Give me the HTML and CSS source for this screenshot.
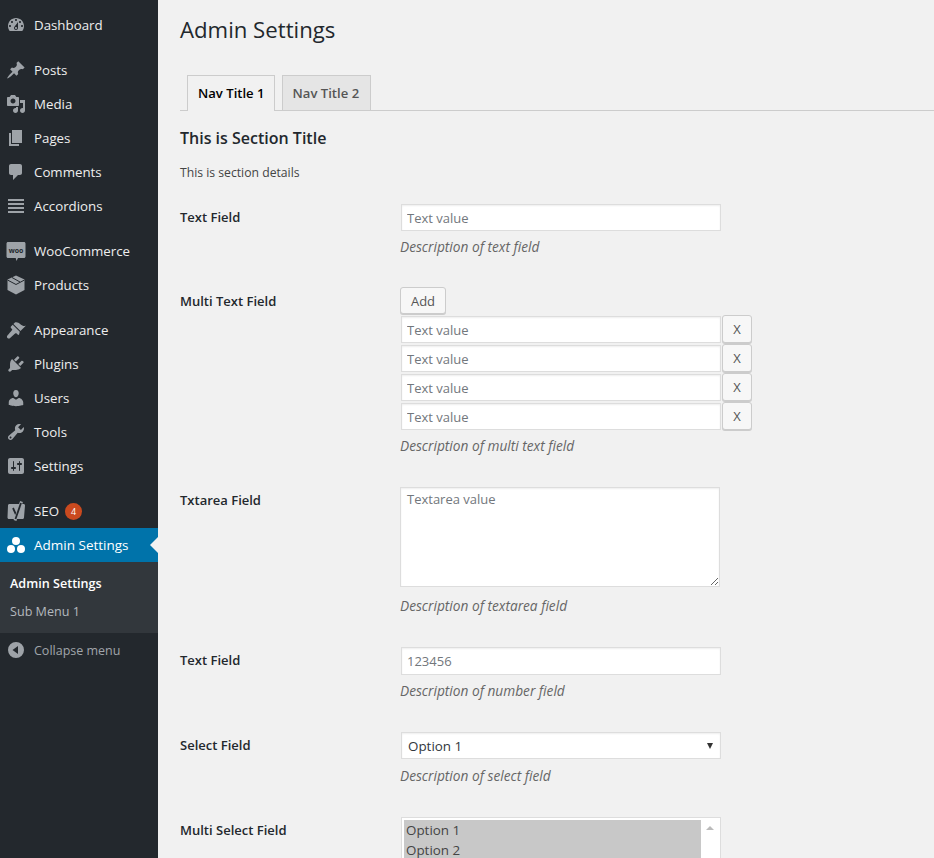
FILE: index.html
```html
<!DOCTYPE html>
<html lang="en">
<head>
<meta charset="utf-8">
<title>Admin Settings</title>
<link rel="stylesheet" href="styles.css">
</head>
<body>
<div id="wrap">
  <div id="adminmenu">
    <a class="menu-item"><svg class="ico" viewBox="0 0 20 20"><path d="M3.76 16h12.48c1.1-1.37 1.76-3.11 1.76-5 0-4.42-3.58-8-8-8s-8 3.58-8 8c0 1.89.66 3.63 1.76 5zM10 4c.55 0 1 .45 1 1s-.45 1-1 1-1-.45-1-1 .45-1 1-1zM6 6c.55 0 1 .45 1 1s-.45 1-1 1-1-.45-1-1 .45-1 1-1zm8 0c.55 0 1 .45 1 1s-.45 1-1 1-1-.45-1-1 .45-1 1-1zm-5.37 5.55L12 7v6c0 1.1-.9 2-2 2s-2-.9-2-2c0-.57.24-1.08.63-1.45zM4 10c.55 0 1 .45 1 1s-.45 1-1 1-1-.45-1-1 .45-1 1-1zm12 0c.55 0 1 .45 1 1s-.45 1-1 1-1-.45-1-1 .45-1 1-1zm-5 3c0-.55-.45-1-1-1s-1 .45-1 1 .45 1 1 1 1-.45 1-1z"/></svg>Dashboard</a>
    <div class="menu-sep"></div>
    <a class="menu-item"><svg class="ico" viewBox="0 0 20 20"><path d="M10.44 3.02l1.82-1.82 6.36 6.35-1.83 1.82c-1.05-.68-2.48-.57-3.41.36l-.75.75c-.92.93-1.04 2.35-.35 3.41l-1.83 1.82-2.41-2.41-2.8 2.79c-.42.42-3.38 2.71-3.8 2.29s1.86-3.39 2.28-3.81l2.79-2.79L4.1 9.36l1.83-1.82c1.05.69 2.48.57 3.4-.36l.75-.75c.93-.92 1.05-2.35.36-3.41z"/></svg>Posts</a>
    <a class="menu-item"><svg class="ico" viewBox="0 0 20 20"><path d="M13 11V4c0-.55-.45-1-1-1h-1.67L9 1H5L3.67 3H2c-.55 0-1 .45-1 1v7c0 .55.45 1 1 1h10c.55 0 1-.45 1-1zM7 4.5c1.38 0 2.5 1.12 2.5 2.5S8.38 9.5 7 9.5 4.5 8.38 4.5 7 5.62 4.5 7 4.5zM14 6h5v10.5c0 1.38-1.12 2.5-2.5 2.5S14 17.88 14 16.5s1.12-2.5 2.5-2.5c.17 0 .34.02.5.05V9h-3V6zm-4 8.05V13h2v3.5c0 1.38-1.12 2.5-2.5 2.5S7 17.88 7 16.5 8.12 14 9.5 14c.17 0 .34.02.5.05z"/></svg>Media</a>
    <a class="menu-item"><svg class="ico" viewBox="0 0 20 20"><path d="M6 15V2h10v13H6zm-1 1h8v2H3V5h2v11z"/></svg>Pages</a>
    <a class="menu-item"><svg class="ico" viewBox="0 0 20 20"><path d="M5 2h9c1.1 0 2 .9 2 2v7c0 1.1-.9 2-2 2h-2l-5 5v-5H5c-1.1 0-2-.9-2-2V4c0-1.1.9-2 2-2z"/></svg>Comments</a>
    <a class="menu-item"><svg class="ico" viewBox="0 0 20 20"><path d="M2 3h16v2H2zM2 7h16v2H2zM2 11h16v2H2zM2 15h16v2H2z"/></svg>Accordions</a>
    <div class="menu-sep"></div>
    <a class="menu-item"><svg class="ico" viewBox="0 0 20 20"><path d="M2 1h16c.8 0 1.500.7 1.500 1.500v13c0 .8-.7 1.500-1.500 1.500h-6l-1.500 3-.8-3H2c-.8 0-1.500-.7-1.500-1.500v-13C.5 1.700 1.200 1 2 1z"/><text class="woo-text" x="10" y="11.500" text-anchor="middle">woo</text></svg>WooCommerce</a>
    <a class="menu-item"><svg class="ico" viewBox="0 0 20 20"><path d="M10 .5l8.500 4v10.500l-8.500 4.500-8.500-4.500V4.500z"/><path class="ico-line" d="M1.500 5l8.500 4.500L18.500 5M6 2.500l8 4.500"/></svg>Products</a>
    <div class="menu-sep"></div>
    <a class="menu-item"><svg class="ico" viewBox="0 0 20 20"><path d="M14.480 11.060L7.410 3.990l1.500-1.500c.5-.56 2.300-.47 3.510.32 1.210.8 1.430 1.280 2.910 2.100 1.180.64 2.450 1.260 4.450.85zm-.71.71L6.700 4.700 4.930 6.470c-.39.39-.39 1.020 0 1.410l1.060 1.060c.39.39.39 1.030 0 1.420-.6.6-3.900 4.500-4.500 5.100-.7.7-.7 1.900 0 2.600s1.900.7 2.600 0c.6-.6 4.500-3.900 5.100-4.500.39-.39 1.020-.39 1.410 0l1.060 1.060c.39.39 1.020.39 1.410 0z"/></svg>Appearance</a>
    <a class="menu-item"><svg class="ico" viewBox="0 0 20 20"><path d="M13.110 4.360L9.870 7.600 8 5.730l3.240-3.240c.35-.34 1.050-.2 1.560.32.520.51.660 1.210.310 1.550zm-8 1.770l.91-1.120 9.010 9.010-1.190.84c-.71.71-2.630 1.160-3.820 1.160H6.140L4.900 17.260c-.59.59-1.540.59-2.120 0-.59-.58-.59-1.530 0-2.120l1.240-1.240v-3.880c0-1.130.4-3.190 1.090-3.890zm7.260 3.970l3.240-3.240c.34-.35 1.040-.21 1.550.31.520.51.660 1.210.310 1.550l-3.240 3.250z"/></svg>Plugins</a>
    <a class="menu-item"><svg class="ico" viewBox="0 0 20 20"><path d="M10 9.250c-2.270 0-2.730-3.440-2.730-3.440C7 4.020 7.820 2 9.970 2c2.160 0 2.980 2.020 2.710 3.810 0 0-.41 3.440-2.680 3.440zm0 2.570L12.720 10c2.390 0 4.520 2.330 4.520 4.530v2.490s-3.650 1.130-7.240 1.130c-3.650 0-7.240-1.130-7.240-1.130v-2.490c0-2.250 1.940-4.480 4.470-4.480z"/></svg>Users</a>
    <a class="menu-item"><svg class="ico" viewBox="0 0 20 20"><path d="M16.680 9.770c-1.340 1.340-3.300 1.670-4.950.99l-5.410 6.520c-.99.99-2.590.99-3.580 0s-.99-2.590 0-3.570l6.520-5.420c-.68-1.650-.35-3.610.99-4.950 1.280-1.280 3.120-1.620 4.720-1.060l-2.890 2.890 2.820 2.820 2.860-2.870c.53 1.580.18 3.390-1.080 4.650zM3.810 16.210c.4.39 1.040.39 1.430 0 .4-.4.4-1.040 0-1.430-.39-.4-1.030-.4-1.430 0-.39.39-.39 1.030 0 1.430z"/></svg>Tools</a>
    <a class="menu-item"><svg class="ico" viewBox="0 0 20 20"><path d="M18 16V4c0-1.100-.9-2-2-2H4c-1.100 0-2 .9-2 2v12c0 1.100.9 2 2 2h12c1.100 0 2-.9 2-2zM8 11h1c.55 0 1 .45 1 1s-.45 1-1 1H8v1.500c0 .28-.22.5-.5.5s-.5-.22-.5-.5V13H6c-.55 0-1-.45-1-1s.45-1 1-1h1V5.500c0-.28.22-.5.5-.5s.5.22.5.5V11zm5-2h-1c-.55 0-1-.45-1-1s.45-1 1-1h1V5.500c0-.28.22-.5.5-.5s.5.22.5.5V7h1c.55 0 1 .45 1 1s-.45 1-1 1h-1v5.500c0 .28-.22.5-.5.5s-.5-.22-.5-.5V9z"/></svg>Settings</a>
    <div class="menu-sep"></div>
    <a class="menu-item"><svg class="ico" viewBox="0 0 20 20"><path d="M3.500 3h14c1 0 1.500.6 1.500 1.500l-1 12c0 .9-.6 1.500-1.500 1.500H3c-1 0-1.500-.6-1.500-1.500l.5-12C2 3.600 2.600 3 3.500 3z"/><path class="ico-y" d="M7 7l3 6.500"/><path class="ico-y-edge" d="M15.500 .5L9 19.500"/><path class="ico-y" d="M15 2L9.500 18"/></svg>SEO<span class="count">4</span></a>
    <a class="menu-item current"><svg class="ico" viewBox="0 0 20 20"><circle cx="10" cy="6" r="4"/><circle cx="5" cy="14" r="4"/><circle cx="15" cy="14" r="4"/></svg>Admin Settings</a>
    <div class="submenu">
      <a class="sub-head">Admin Settings</a>
      <a>Sub Menu 1</a>
    </div>
    <a class="menu-item collapse"><svg class="ico" viewBox="0 0 20 20"><path d="M10 2a8 8 0 1 1 0 16 8 8 0 0 1 0-16zm2 4L6.500 10l5.500 4z" fill-rule="evenodd"/></svg>Collapse menu</a>
  </div>

  <div id="content">
    <h1>Admin Settings</h1>
    <div class="tabs">
      <a class="tab active">Nav Title 1</a>
      <a class="tab">Nav Title 2</a>
    </div>
    <h2>This is Section Title</h2>
    <p class="details">This is section details</p>

    <div class="row row-text">
      <label>Text Field</label>
      <div class="field">
        <input type="text" value="Text value">
        <p class="desc">Description of text field</p>
      </div>
    </div>

    <div class="row row-multi">
      <label>Multi Text Field</label>
      <div class="field">
        <button class="btn btn-add">Add</button>
        <div class="multi-line"><input type="text" value="Text value"><button class="btn btn-x">X</button></div>
        <div class="multi-line"><input type="text" value="Text value"><button class="btn btn-x">X</button></div>
        <div class="multi-line"><input type="text" value="Text value"><button class="btn btn-x">X</button></div>
        <div class="multi-line"><input type="text" value="Text value"><button class="btn btn-x">X</button></div>
        <p class="desc">Description of multi text field</p>
      </div>
    </div>

    <div class="row row-area">
      <label>Txtarea Field</label>
      <div class="field">
        <textarea>Textarea value</textarea>
        <p class="desc">Description of textarea field</p>
      </div>
    </div>

    <div class="row row-num">
      <label>Text Field</label>
      <div class="field">
        <input type="text" value="123456">
        <p class="desc">Description of number field</p>
      </div>
    </div>

    <div class="row row-select">
      <label>Select Field</label>
      <div class="field">
        <div class="select-box">Option 1<span class="arrow"></span></div>
        <p class="desc">Description of select field</p>
      </div>
    </div>

    <div class="row row-mselect">
      <label>Multi Select Field</label>
      <div class="field">
        <div class="multi-select">
          <div class="options">
            <div class="opt">Option 1</div>
            <div class="opt">Option 2</div>
          </div>
          <div class="scroll"><span class="scroll-up"></span></div>
        </div>
      </div>
    </div>
  </div>
</div>
</body>
</html>
```

FILE: styles.css
```css
html, body {
  margin: 0;
  height: 858px;
  overflow: hidden;
}

body {
  background-color: #f1f1f1;
  color: #444;
  font-family: "Open Sans", sans-serif;
  font-size: 13px;
}

#wrap {
  display: flex;
  height: 858px;
}

#adminmenu {
  width: 158px;
  flex: none;
  background-color: #23282d;
  padding-top: 8px;
}

.menu-sep {
  height: 11px;
}

.menu-item {
  display: flex;
  align-items: center;
  height: 34px;
  color: #eee;
  font-size: 13.3px;
  position: relative;
}

.ico {
  width: 20px;
  height: 20px;
  margin: 0 8px 0 6px;
  fill: #9ea3a8;
  flex: none;
}

.ico-line {
  fill: none;
  stroke: #23282d;
  stroke-width: 1;
}

.ico-y {
  fill: none;
  stroke: #23282d;
  stroke-width: 1.8;
}

.ico-y-edge {
  fill: none;
  stroke: #9ea3a8;
  stroke-width: 3;
}

.woo-text {
  font-size: 7px;
  font-weight: 700;
  fill: #23282d;
}

.count {
  display: inline-block;
  width: 17px;
  height: 17px;
  line-height: 17px;
  margin-left: 6px;
  border-radius: 50%;
  background-color: #ca4a1f;
  color: #fff;
  font-size: 9px;
  text-align: center;
}

.current {
  background-color: #0073aa;
  color: #fff;
  font-size: 13.5px;
}

.current .ico {
  fill: #fff;
}

.current::after {
  content: "";
  position: absolute;
  right: 0;
  top: 9px;
  border: 8px solid transparent;
  border-left: 0;
  border-right-color: #f1f1f1;
}

.submenu {
  height: 71px;
  box-sizing: border-box;
  padding-top: 8px;
  background-color: #32373c;
  font-size: 12.6px;
  color: #b4b9be;
}

.submenu a {
  display: block;
  height: 28px;
  line-height: 28px;
  padding-left: 10px;
}

.submenu .sub-head {
  color: #fff;
  font-weight: 600;
}

.collapse {
  color: #a0a5aa;
  font-size: 12.5px;
}

#content {
  flex: 1;
  padding: 0 0 0 22px;
  min-width: 0;
}

h1 {
  margin: 0;
  padding-top: 14px;
  height: 46px;
  color: #23282d;
  font-size: 22.2px;
  font-weight: 400;
  line-height: 32px;
}

.tabs {
  display: flex;
  gap: 7px;
  height: 35px;
  margin-top: 15px;
  padding-left: 7px;
  border-bottom: 1px solid #ccc;
}

.tab {
  height: 34px;
  line-height: 34px;
  padding: 0 11px 0 10px;
  border: 1px solid #ccc;
  border-bottom: 0;
  background-color: #e5e5e5;
  color: #555;
  font-weight: 600;
  font-size: 13.1px;
}

.tab.active {
  height: 35px;
  padding-right: 9px;
  background-color: #f1f1f1;
  color: #000;
  margin-bottom: -1px;
}

h2 {
  margin: 16px 0 0;
  color: #23282d;
  font-size: 16px;
  font-weight: 600;
  line-height: 22px;
}

.details {
  margin: 14px 0 0;
  font-size: 12.2px;
  line-height: 20px;
}

.row {
  display: flex;
}

.row label {
  width: 221px;
  flex: none;
  color: #23282d;
  font-weight: 600;
  font-size: 13px;
  line-height: 20px;
  padding-top: 3px;
}

.row-text { margin-top: 21px; }
.row-multi { margin-top: 30px; }
.row-area { margin-top: 31px; }
.row-num { margin-top: 31px; }
.row-select { margin-top: 31px; }
.row-mselect { margin-top: 31px; }

.row-multi label { padding-top: 4px; }

input, textarea {
  box-sizing: border-box;
  display: block;
  width: 320px;
  height: 27px;
  margin: 0;
  padding: 0 5px;
  border: 1px solid #ddd;
  background-color: #fff;
  box-shadow: inset 0 1px 2px rgba(0, 0, 0, 0.07);
  color: #72777c;
  font-family: "Open Sans", sans-serif;
  font-size: 13px;
  border-radius: 0;
  outline: 0;
}

.row-num input {
  height: 28px;
}

textarea {
  width: 320px;
  height: 100px;
  margin-left: -1px;
  padding: 2px 6px;
}

.desc {
  margin: 6px 0 0 -1px;
  color: #666;
  font-style: italic;
  font-size: 13.7px;
  line-height: 20px;
}

.row-area .desc { margin-top: 9px; }
.row-multi .desc { margin-top: 6px; }
.row-select .desc { margin-top: 7px; }

.btn {
  box-sizing: border-box;
  border: 1px solid #ccc;
  border-radius: 3px;
  background-color: #f7f7f7;
  box-shadow: 0 1px 0 #ccc;
  color: #555;
  font-family: "Open Sans", sans-serif;
  font-size: 13px;
}

.btn-add {
  display: block;
  height: 27px;
  width: 46px;
  padding: 0;
  margin: 0 0 2px -1px;
}

.btn-x {
  width: 30px;
  height: 28px;
  padding: 0;
  margin-left: 1px;
}

.multi-line {
  display: flex;
  align-items: flex-end;
  height: 27px;
  margin-bottom: 2px;
}

.select-box {
  position: relative;
  box-sizing: border-box;
  width: 320px;
  height: 27px;
  padding-left: 6px;
  line-height: 26px;
  border: 1px solid #ddd;
  background-color: #fff;
  box-shadow: inset 0 1px 2px rgba(0, 0, 0, 0.07);
  color: #32373c;
  font-size: 13.4px;
}

.arrow {
  position: absolute;
  right: 7px;
  top: 10px;
  border: 3px solid transparent;
  border-top: 6px solid #333;
  border-bottom: 0;
}

.multi-select {
  display: flex;
  box-sizing: border-box;
  width: 320px;
  height: 41px;
  padding: 2px 2px 0;
  border: 1px solid #ddd;
  border-bottom: 0;
  background-color: #fff;
  color: #444;
  font-size: 13.4px;
}

.options {
  flex: 1;
  background-color: #c8c8c8;
}

.opt {
  height: 20px;
  line-height: 20px;
  padding-left: 2px;
}

.scroll {
  width: 17px;
  flex: none;
  display: flex;
  justify-content: center;
  padding-top: 6px;
  box-sizing: border-box;
}

.scroll-up {
  width: 0;
  height: 0;
  border: 4px solid transparent;
  border-top: 0;
  border-bottom: 4px solid #bbb;
}
```
